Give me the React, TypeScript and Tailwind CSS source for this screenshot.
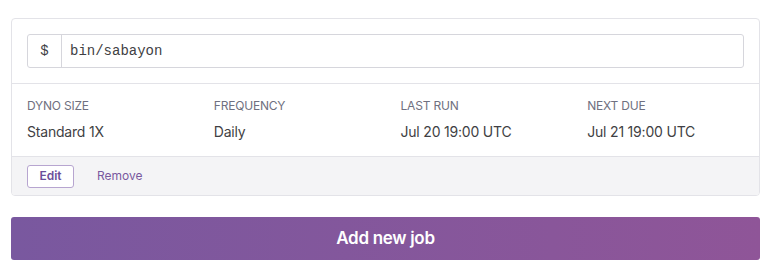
import React from "react";

const sans = { fontFamily: "Inter, 'Noto Sans', sans-serif" };

export default function App() {
  const cols = [
    { label: "DYNO SIZE", value: "Standard 1X" },
    { label: "FREQUENCY", value: "Daily" },
    { label: "LAST RUN", value: "Jul 20 19:00 UTC" },
    { label: "NEXT DUE", value: "Jul 21 19:00 UTC" },
  ];
  return (
    <div className="w-[763px] h-[266px] bg-white pt-[18px] pl-[11px]" style={sans}>
      <div className="w-[749px] border border-[#e3e3e8] rounded-[4px] overflow-hidden">
        <div className="px-[15px] py-[15px] border-b border-[#e3e3e8]">
          <div className="flex h-[34px] border border-[#d6d6dc] rounded-[3px] text-[14px] text-[#3f3f44]" style={{ fontFamily: "'Liberation Mono', monospace" }}>
            <div className="w-[34px] flex items-center justify-center border-r border-[#d6d6dc] shrink-0">$</div>
            <div className="flex items-center pl-[8px]">bin/sabayon</div>
          </div>
        </div>
        <div className="flex h-[73px] border-b border-[#e3e3e8]">
          {cols.map((c) => (
            <div key={c.label} className="w-[187px] pl-[15px] pt-[14px]">
              <div className="text-[12px] leading-[15px] text-[#6f7080] tracking-[-0.2px]">{c.label}</div>
              <div className="text-[14px] leading-[17px] mt-[10px] text-[#3f3f44] tracking-[-0.2px]">{c.value}</div>
            </div>
          ))}
        </div>
        <div className="h-[38px] bg-[#f4f4f6] flex items-center pl-[15px]">
          <div className="h-[23px] w-[47px] border border-[#b7a5d0] rounded-[3px] bg-white flex items-center justify-center text-[12px] font-semibold text-[#6b4e9b]">Edit</div>
          <div className="ml-[23px] text-[12px] text-[#79589f]">Remove</div>
        </div>
      </div>
      <div className="mt-[21px] w-[749px] h-[43px] rounded-[3px] bg-gradient-to-r from-[#79589f] to-[#8f5598] flex items-center justify-center text-white text-[17px] font-semibold tracking-[-0.3px]">
        Add new job
      </div>
    </div>
  );
}
